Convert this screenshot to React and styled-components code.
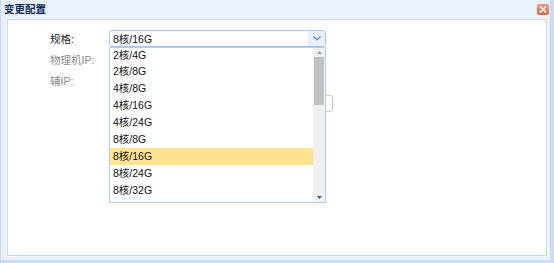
import React from "react";
import styled, { createGlobalStyle } from "styled-components";

const GlobalStyle = createGlobalStyle`
    html, body {
        margin: 0;
        padding: 0;
        background: #fff;
    }
    body {
        font-family: "Liberation Sans", "Noto Sans CJK SC", sans-serif;
        font-size: 10.5px;
    }
`;

const options = ["2核/4G", "2核/8G", "4核/8G", "4核/16G", "4核/24G", "8核/8G", "8核/16G", "8核/24G", "8核/32G", "16核/32G"];

const App = () => {
    const selected = "8核/16G";
    return (
        <>
            <GlobalStyle />
            <Window>
                <Header>
                    <Title>变更配置</Title>
                    <CloseButton aria-label="close">
                        <svg width="8" height="7" viewBox="0 0 8 7">
                            <path d="M1 0.5 L7 6.5 M7 0.5 L1 6.5" stroke="#fff" strokeWidth="1.6" />
                        </svg>
                    </CloseButton>
                </Header>
                <Body>
                    <Form>
                        <Row>
                            <Label>规格:</Label>
                            <Combo>
                                <ComboText>{selected}</ComboText>
                                <ComboArrow>
                                    <svg width="8" height="5" viewBox="0 0 8 5">
                                        <path d="M0.5 0.5 L4 4 L7.5 0.5" fill="none" stroke="#5b86c4" strokeWidth="1.1" />
                                    </svg>
                                </ComboArrow>
                                <DropList>
                                    <Items>
                                        {options.map((o) => (
                                            <Item key={o} active={o === selected}>{o}</Item>
                                        ))}
                                    </Items>
                                    <ScrollBar>
                                        <ScrollButton>
                                            <svg width="5" height="3" viewBox="0 0 5 3"><path d="M0 3 L2.5 0 L5 3Z" fill="#a0a0a0" /></svg>
                                        </ScrollButton>
                                        <Track>
                                            <Thumb />
                                        </Track>
                                        <ScrollButton>
                                            <svg width="5" height="3" viewBox="0 0 5 3"><path d="M0 0 L5 0 L2.5 3Z" fill="#505050" /></svg>
                                        </ScrollButton>
                                    </ScrollBar>
                                </DropList>
                            </Combo>
                        </Row>
                        <Row>
                            <Label muted>物理机IP:</Label>
                            <TextBox />
                        </Row>
                        <Row>
                            <Label muted>辅IP:</Label>
                            <TextBox />
                        </Row>
                        <Row>
                            <Label />
                            <TextBox wide />
                        </Row>
                    </Form>
                </Body>
            </Window>
        </>
    );
};

export default App;

const Window = styled.div`
    width: 554px;
    height: 263px;
    box-sizing: border-box;
    background: #e9f1fc;
    border-left: 1px solid #c7d8f0;
    border-right: 4px solid #cddcf2;
    border-bottom: 3px solid #cddcf2;
    display: flex;
    flex-direction: column;
    padding: 0 3px 4px 6px;
`;

const Header = styled.div`
    height: 19px;
    display: flex;
    align-items: center;
    justify-content: space-between;
    margin-left: -5px;
`;

const Title = styled.div`
    font-weight: bold;
    font-size: 10.5px;
    color: #0e2d5f;
    padding-left: 2px;
    margin-top: -2px;
`;

const CloseButton = styled.div`
    width: 12px;
    height: 11px;
    border-radius: 2px;
    background: linear-gradient(#ec9a7c, #d96f4d);
    display: flex;
    align-items: center;
    justify-content: center;
    margin-right: -2px;
`;

const Body = styled.div`
    flex: 1;
    background: #fff;
    border: 1px solid #c4d7f1;
    box-shadow: 0 0 0 1px #f6f9fe;
    position: relative;
`;

const Form = styled.div`
    display: flex;
    flex-direction: column;
    gap: 4px;
    padding: 10px 0 0 42px;
`;

const Row = styled.div`
    display: flex;
    align-items: center;
    height: 17px;
`;

const Label = styled.div`
    width: 59px;
    color: ${({ muted }) => (muted ? "#8a8a8a" : "#222")};
`;

const Combo = styled.div`
    position: relative;
    width: 217px;
    height: 17px;
    box-sizing: border-box;
    border: 1px solid #a9c4ea;
    border-radius: 3px;
    display: flex;
    align-items: center;
    background: #fff;
    z-index: 2;
`;

const ComboText = styled.div`
    flex: 1;
    padding-left: 3px;
    color: #111;
`;

const ComboArrow = styled.div`
    width: 17px;
    height: 100%;
    background: #e6effc;
    display: flex;
    align-items: center;
    justify-content: center;
    border-radius: 0 2px 2px 0;
`;

const DropList = styled.div`
    position: absolute;
    top: 16px;
    left: -1px;
    width: 217px;
    height: 156px;
    box-sizing: border-box;
    border: 1px solid #b3cbec;
    background: #fff;
    display: flex;
    overflow: hidden;
`;

const Items = styled.div`
    flex: 1;
    display: flex;
    flex-direction: column;
    margin-top: -1.5px;
`;

const Item = styled.div`
    height: 16.9px;
    line-height: 16.9px;
    flex-shrink: 0;
    padding-left: 3px;
    color: #111;
    background: ${({ active }) => (active ? "#ffe48d" : "transparent")};
`;

const ScrollBar = styled.div`
    width: 12px;
    display: flex;
    flex-direction: column;
    background: #f0f0f0;
`;

const ScrollButton = styled.div`
    height: 9px;
    display: flex;
    align-items: center;
    justify-content: center;
`;

const Track = styled.div`
    flex: 1;
    padding: 0 1px;
`;

const Thumb = styled.div`
    height: 48px;
    background: #c1c1c1;
`;

const TextBox = styled.div`
    width: ${({ wide }) => (wide ? "224px" : "217px")};
    height: 17px;
    box-sizing: border-box;
    border: 1px solid #c9c9c9;
    border-radius: 3px;
    background: #fff;
    margin-top: ${({ wide }) => (wide ? "4px" : "0")};
`;
